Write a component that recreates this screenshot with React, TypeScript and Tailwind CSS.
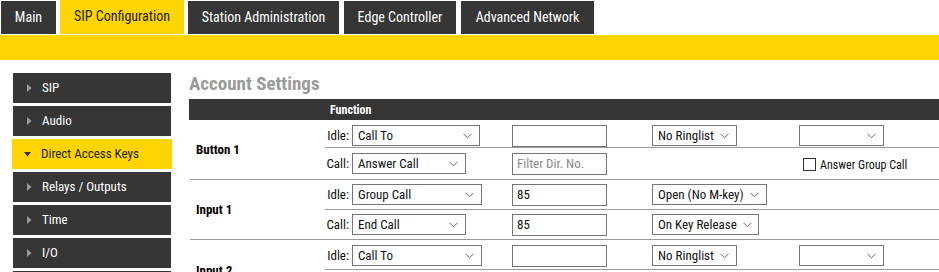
const FONT = "font-['Roboto_Condensed',Roboto,'Liberation_Sans',sans-serif]";

const tabs = [
  { label: "Main", cls: "w-[55px]" },
  { label: "SIP Configuration", cls: "w-[124px] ml-[4px]", active: true },
  { label: "Station Administration", cls: "w-[151px] ml-[4px]" },
  { label: "Edge Controller", cls: "w-[112px] ml-[5px]" },
  { label: "Advanced Network", cls: "w-[133px] ml-[5px]" },
];

const menu = ["SIP", "Audio", "Direct Access Keys", "Relays / Outputs", "Time", "I/O", "Network"];

function Chevron() {
  return (
    <svg width="9" height="6" viewBox="0 0 9 6" className="shrink-0 ml-[6px]">
      <polyline points="0.5,0.8 4.5,4.8 8.5,0.8" fill="none" stroke="#666" strokeWidth="1" />
    </svg>
  );
}

function Select({ value, w }: { value: string; w: string }) {
  return (
    <div className={`${w} h-[21px] border border-[#767676] bg-white flex items-center justify-between pl-[5px] pr-[7px] text-[13px] text-[#111] leading-none whitespace-nowrap`}>
      <span>{value}</span>
      <Chevron />
    </div>
  );
}

function TextBox({ value, placeholder }: { value?: string; placeholder?: string }) {
  return (
    <div className="w-[95px] h-[22px] border border-[#767676] bg-white flex items-center px-[4px] text-[13px] leading-none">
      {value ? <span className="text-[#111]">{value}</span> : <span className="text-[#8a8a8a]">{placeholder}</span>}
    </div>
  );
}

type Sub = {
  kind: string;
  sel: string;
  selW: string;
  box?: string;
  placeholder?: string;
  third?: string;
  thirdW?: string;
  fourth?: boolean;
  check?: boolean;
  h: string;
};

function SubRow({ s, last }: { s: Sub; last?: boolean }) {
  return (
    <div className={`${s.h} flex items-center ${last ? "" : "border-b border-[#9a9a9a]"}`}>
      <div className="w-[24px] text-right text-[13px] text-[#111] mr-[3px]">{s.kind}</div>
      <div className="w-[160px]">
        <Select value={s.sel} w={s.selW} />
      </div>
      <div className="w-[140px]">
        {(s.box !== undefined || s.placeholder) && <TextBox value={s.box} placeholder={s.placeholder} />}
      </div>
      <div className="w-[147px]">{s.third && <Select value={s.third} w={s.thirdW ?? ""} />}</div>
      <div>
        {s.fourth && <Select value="" w="w-[85px]" />}
        {s.check && (
          <div className="flex items-center ml-[4px] mt-[2px]">
            <div className="w-[13px] h-[13px] border border-[#333] bg-white" />
            <span className="ml-[4px] text-[12px] text-[#111]">Answer Group Call</span>
          </div>
        )}
      </div>
    </div>
  );
}

function Row({ label, subs }: { label: string; subs: Sub[] }) {
  return (
    <div className="flex border-b border-[#9a9a9a] ml-px">
      <div className="w-[135px] flex items-center pl-[6px] text-[13px] font-bold text-black">{label}</div>
      <div className="flex-1">
        {subs.map((s, i) => (
          <SubRow key={i} s={s} last={i === subs.length - 1} />
        ))}
      </div>
    </div>
  );
}

export default function App() {
  return (
    <div className={`${FONT} w-[939px] h-[272px] overflow-hidden bg-white`}>
      <div className="flex items-end pl-px h-[34px]">
        {tabs.map((t) =>
          t.active ? (
            <div key={t.label} className={`${t.cls} h-[34px] bg-[#ffd400] text-[#222] text-[14px] flex items-center justify-center pb-[2px]`}>
              {t.label}
            </div>
          ) : (
            <div key={t.label} className={`${t.cls} h-[33px] bg-[#363636] text-white text-[14px] flex items-center justify-center`}>
              {t.label}
            </div>
          )
        )}
      </div>
      <div className="mt-px h-[25px] bg-[#ffd400]" />
      <div className="flex pt-[13px]">
        <div className="w-[189px] shrink-0 pl-[13px] pr-[18px] flex flex-col gap-[3px]">
          {menu.map((m) =>
            m === "Direct Access Keys" ? (
              <div key={m} className="h-[30px] -mx-px bg-[#ffd400] flex items-center text-[13px] text-[#222]">
                <svg width="7" height="5" viewBox="0 0 7 5" className="ml-[12px] mr-[10px]">
                  <polygon points="0,0 7,0 3.5,4.5" fill="#333" />
                </svg>
                {m}
              </div>
            ) : (
              <div key={m} className="h-[30px] bg-[#363636] flex items-center text-[13px] text-white">
                <svg width="5" height="8" viewBox="0 0 5 8" className="ml-[14px] mr-[10px]">
                  <polygon points="0,0 4.5,4 0,8" fill="#9a9a9a" />
                </svg>
                {m}
              </div>
            )
          )}
        </div>
        <div className="flex-1">
          <div className="h-[26px] text-[19px] font-bold text-[#9a9a9a] leading-[19px] pt-px">Account Settings</div>
          <div className="h-[21px] bg-[#363636] text-white text-[12px] font-bold flex items-center pl-[141px]">Function</div>
          <Row
            label="Button 1"
            subs={[
              { kind: "Idle:", sel: "Call To", selW: "w-[128px]", box: "", third: "No Ringlist", thirdW: "w-[85px]", fourth: true, h: "h-[28px] pt-[4px]" },
              { kind: "Call:", sel: "Answer Call", selW: "w-[114px]", placeholder: "Filter Dir. No.", check: true, h: "h-[31px]" },
            ]}
          />
          <Row
            label="Input 1"
            subs={[
              { kind: "Idle:", sel: "Group Call", selW: "w-[130px]", box: "85", third: "Open (No M-key)", thirdW: "w-[115px]", h: "h-[30px]" },
              { kind: "Call:", sel: "End Call", selW: "w-[114px]", box: "85", third: "On Key Release", thirdW: "w-[107px]", h: "h-[29px]" },
            ]}
          />
          <Row
            label="Input 2"
            subs={[
              { kind: "Idle:", sel: "Call To", selW: "w-[130px]", box: "", third: "No Ringlist", thirdW: "w-[85px]", fourth: true, h: "h-[30px] pt-[2px]" },
              { kind: "Call:", sel: "Answer Call", selW: "w-[114px]", placeholder: "Filter Dir. No.", check: true, h: "h-[31px]" },
            ]}
          />
        </div>
      </div>
    </div>
  );
}
